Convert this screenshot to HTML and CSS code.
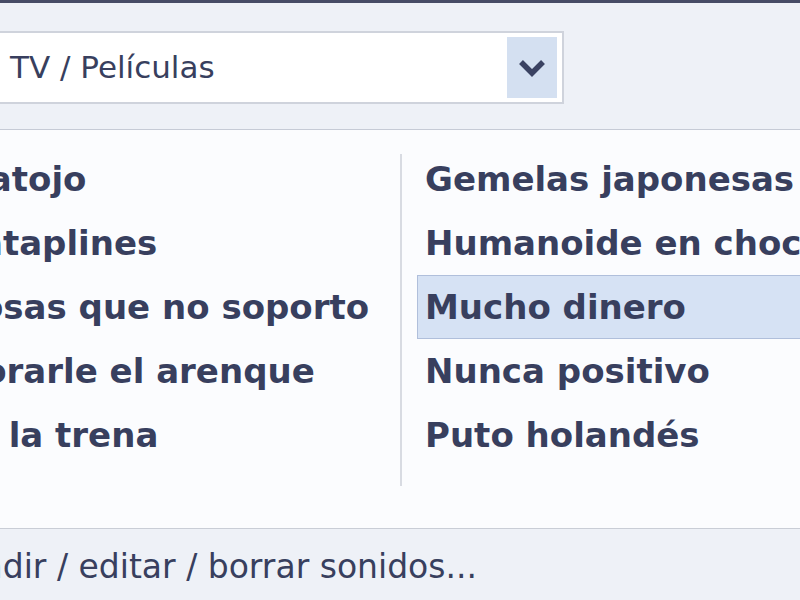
FILE: index.html
```html
<!DOCTYPE html>
<html lang="es">
<head>
    <meta charset="UTF-8">
    <meta name="viewport" content="width=device-width, initial-scale=1.0">
    <title>Sonidos</title>
    <link rel="stylesheet" href="styles.css">
</head>
<body>
    <div class="topbar"></div>
    <div class="header">
        <div class="dropdown">
            <span class="dropdown-text">TV / Películas</span>
            <span class="dropdown-btn">
                <svg width="28" height="18" viewBox="0 0 28 18">
                    <path d="M3 3 L14 14 L25 3" fill="none" stroke="#3a4262" stroke-width="5.5"/>
                </svg>
            </span>
        </div>
    </div>
    <div class="content">
        <ul class="list list-left">
            <li>Matojo</li>
            <li>Cataplines</li>
            <li>Cosas que no soporto</li>
            <li>Dorarle el arenque</li>
            <li>¡A la trena</li>
        </ul>
        <div class="divider"></div>
        <ul class="list list-right">
            <li>Gemelas japonesas</li>
            <li>Humanoide en chocolate</li>
            <li class="selected">Mucho dinero</li>
            <li>Nunca positivo</li>
            <li>Puto holandés</li>
        </ul>
    </div>
    <div class="footer">Añadir / editar / borrar sonidos...</div>
</body>
</html>
```
FILE: styles.css
```css
html, body {
    margin: 0;
    padding: 0;
    height: 600px;
    overflow: hidden;
}
body {
    font-family: "DejaVu Sans", Tahoma, sans-serif;
    color: #383f5e;
    background: #fbfcfe;
}
.topbar {
    height: 3px;
    background: #474c66;
}
.header {
    height: 127px;
    background: #eef1f7;
    border-bottom: 1px solid #c6cbd6;
    box-sizing: border-box;
    padding-top: 28px;
}
.dropdown {
    margin-left: -12px;
    width: 576px;
    height: 73px;
    box-sizing: border-box;
    background: #ffffff;
    border: 2px solid #cfd3dc;
    display: flex;
    align-items: center;
    justify-content: space-between;
    padding: 4px 5px 4px 20px;
}
.dropdown-text {
    font-size: 31px;
    line-height: 1;
}
.dropdown-btn {
    width: 50px;
    height: 100%;
    background: #d4e0f1;
    display: flex;
    align-items: center;
    justify-content: center;
}
.content {
    height: 398px;
    box-sizing: border-box;
    display: grid;
    grid-template-columns: 445px 2px 1fr;
    margin-left: -45px;
    padding-top: 17px;
    background: #fbfcfe;
}
.list {
    list-style: none;
    margin: 0;
    padding: 0;
    font-weight: bold;
    font-size: 34px;
    white-space: nowrap;
}
.list li {
    height: 64px;
    line-height: 64px;
    box-sizing: border-box;
}
.list-right {
    padding-left: 15px;
}
.list-right li {
    padding-left: 8px;
}
.list-right li.selected {
    background: #d6e2f4;
    border: 1px solid #b0bfdb;
    border-right: none;
    line-height: 62px;
    padding-left: 7px;
}
.divider {
    margin-top: 7px;
    height: 332px;
    background: #d8dbe2;
}
.footer {
    height: 72px;
    box-sizing: border-box;
    background: #eef1f7;
    border-top: 1px solid #c9cdd6;
    font-size: 33px;
    line-height: 76px;
    margin-left: -61px;
    white-space: nowrap;
}
```
